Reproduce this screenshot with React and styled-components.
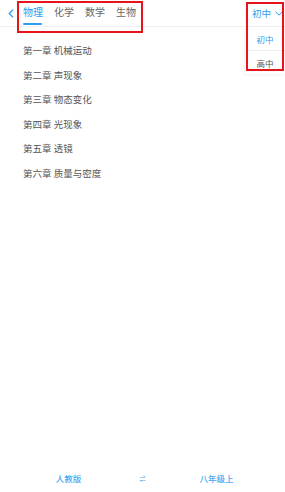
import React, { useState } from "react";
import styled, { createGlobalStyle, css } from "styled-components";

const GlobalStyle = createGlobalStyle`
  html, body {
    margin: 0;
    padding: 0;
    background: #fff;
  }
  body {
    font-family: "Noto Sans CJK SC", "Noto Sans", sans-serif;
  }
`;

const BLUE = "#2f9bf0";
const MARK = "#e8141b";

const Page = styled.div`
  width: 285px;
  height: 492px;
  display: flex;
  flex-direction: column;
  overflow: hidden;
`;

const Header = styled.div`
  position: relative;
  display: flex;
  align-items: stretch;
  height: 26px;
  border-bottom: 1px solid #efefef;
`;

const Back = styled.button`
  width: 17px;
  padding: 0 0 0 4px;
  border: 0;
  background: none;
  display: flex;
  align-items: center;
  justify-content: center;
`;

const Tabs = styled.div`
  position: relative;
  display: flex;
  gap: 11px;
  padding: 0 7px 0 6px;

  &::after {
    content: "";
    position: absolute;
    top: 1px;
    bottom: -7px;
    left: 0;
    right: 0;
    border: 2px solid ${MARK};
    pointer-events: none;
  }
`;

const Tab = styled.div`
  position: relative;
  display: flex;
  align-items: center;
  padding-bottom: 3px;
  font-size: 10px;
  color: ${(p) => (p.active ? BLUE : "#666")};

  ${(p) =>
    p.active &&
    css`
      &::after {
        content: "";
        position: absolute;
        left: 0;
        right: 1px;
        bottom: 1px;
        height: 2px;
        border-radius: 1px;
        background: ${BLUE};
      }
    `}
`;

const Level = styled.div`
  position: relative;
  margin-left: auto;
  width: 40px;

  &::after {
    content: "";
    position: absolute;
    top: 2px;
    left: 1px;
    right: 1px;
    bottom: -45px;
    border: 2px solid ${MARK};
    pointer-events: none;
    z-index: 2;
  }
`;

const Toggle = styled.div`
  height: 100%;
  display: flex;
  align-items: center;
  gap: 4px;
  padding: 0 0 3px 7px;
  font-size: 9.5px;
  color: ${BLUE};
`;

const Menu = styled.div`
  position: absolute;
  top: 27px;
  left: 0;
  right: 0;
  background: #fff;
  box-shadow: -1px 1px 2px rgba(0, 0, 0, 0.06);
  z-index: 1;
`;

const MenuItem = styled.div`
  height: 23px;
  display: flex;
  align-items: center;
  justify-content: center;
  font-size: 8.5px;
  color: ${(p) => (p.active ? BLUE : "#555")};
  & + & {
    border-top: 1px solid #eee;
  }
`;

const List = styled.ul`
  list-style: none;
  margin: 0;
  padding: 11px 0 0 23px;
`;

const Chapter = styled.li`
  height: 24.5px;
  display: flex;
  align-items: center;
  font-size: 9.5px;
  color: #555;
`;

const Footer = styled.div`
  margin-top: auto;
  height: 28px;
  display: grid;
  grid-template-columns: repeat(3, 74px);
  justify-content: center;
  align-items: center;
`;

const FooterItem = styled.div`
  text-align: center;
  font-size: ${(p) => (p.small ? "6.5px" : "8.5px")};
  font-weight: 500;
  color: #45a9f2;
`;

const tabs = ["物理", "化学", "数学", "生物"];
const chapters = [
  "第一章 机械运动",
  "第二章 声现象",
  "第三章 物态变化",
  "第四章 光现象",
  "第五章 透镜",
  "第六章 质量与密度",
];

export default function App() {
  const [active, setActive] = useState(0);
  const [level, setLevel] = useState("初中");

  return (
    <Page>
      <GlobalStyle />
      <Header>
        <Back>
          <svg width="6" height="9" viewBox="0 0 6 9">
            <polyline points="5,0.8 1.2,4.5 5,8.2" fill="none" stroke={BLUE} strokeWidth="1.2" />
          </svg>
        </Back>
        <Tabs>
          {tabs.map((t, i) => (
            <Tab key={t} active={i === active} onClick={() => setActive(i)}>
              {t}
            </Tab>
          ))}
        </Tabs>
        <Level>
          <Toggle>
            {level}
            <svg width="8" height="5" viewBox="0 0 8 5">
              <polyline points="0.5,0.6 4,4.2 7.5,0.6" fill="none" stroke={BLUE} strokeWidth="1" />
            </svg>
          </Toggle>
          <Menu>
            {["初中", "高中"].map((l) => (
              <MenuItem key={l} active={l === level} onClick={() => setLevel(l)}>
                {l}
              </MenuItem>
            ))}
          </Menu>
        </Level>
      </Header>
      <List>
        {chapters.map((c) => (
          <Chapter key={c}>{c}</Chapter>
        ))}
      </List>
      <Footer>
        <FooterItem>人教版</FooterItem>
        <FooterItem small>⇌</FooterItem>
        <FooterItem>八年级上</FooterItem>
      </Footer>
    </Page>
  );
}
